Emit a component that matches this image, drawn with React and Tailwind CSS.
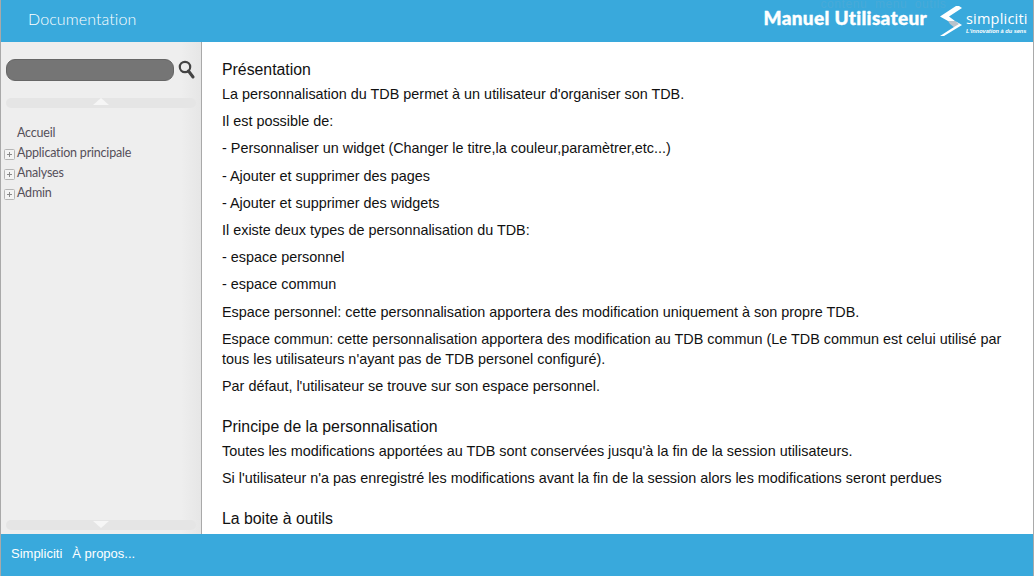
import React from "react";

const paragraphs1 = [
  "La personnalisation du TDB permet à un utilisateur d'organiser son TDB.",
  "Il est possible de:",
  "- Personnaliser un widget (Changer le titre,la couleur,paramètrer,etc...)",
  "- Ajouter et supprimer des pages",
  "- Ajouter et supprimer des widgets",
  "Il existe deux types de personnalisation du TDB:",
  "- espace personnel",
  "- espace commun",
  "Espace personnel: cette personnalisation apportera des modification uniquement à son propre TDB.",
  "Espace commun: cette personnalisation apportera des modification au TDB commun (Le TDB commun est celui utilisé par tous les utilisateurs n'ayant pas de TDB personel configuré).",
  "Par défaut, l'utilisateur se trouve sur son espace personnel.",
];
const paragraphs2 = [
  "Toutes les modifications apportées au TDB sont conservées jusqu'à la fin de la session utilisateurs.",
  "Si l'utilisateur n'a pas enregistré les modifications avant la fin de la session alors les modifications seront perdues",
];

function Plus() {
  return (
    <svg width="11" height="11" viewBox="0 0 11 11" className="shrink-0">
      <rect x="0.5" y="0.5" width="10" height="10" rx="1" fill="#f4f4f4" stroke="#b5b5b5" />
      <path d="M3 5.5H8M5.5 3V8" stroke="#8a8a8a" fill="none" />
    </svg>
  );
}

function Item({ label, expandable }) {
  return (
    <div className="flex items-center h-5">
      <div className="w-[13px] pt-[3px] pl-[3px] shrink-0 flex">{expandable && <Plus />}</div>
      <span className="ml-[3px] text-[12.5px] tracking-[-0.2px] text-[#55505a] font-['Lato',sans-serif]">{label}</span>
    </div>
  );
}

function Scroller({ up }) {
  return (
    <div className="mx-[5px] h-[10px] rounded-[5px] bg-[#e5e5e5] flex justify-center">
      <svg width="16" height="8" viewBox="0 0 16 8" className={up ? "" : "mt-[1px]"}>
        <path d={up ? "M8 0L16 7H0Z" : "M0 0H16L8 7Z"} fill="#f6f6f6" />
      </svg>
    </div>
  );
}

export default function App() {
  return (
    <div className="w-[1034px] h-[576px] flex flex-col bg-white border-x border-[#a9a9a9] overflow-hidden font-['Liberation_Sans',Arial,sans-serif]">
      <header className="h-[42px] shrink-0 bg-[#39a9dc] flex items-center justify-between pl-[27px] pr-[6px]">
        <span className="mb-[5px] text-[16px] font-light tracking-[0.1px] text-white font-['Lato',sans-serif]">Documentation</span>
        <div className="flex items-center">
          <div className="relative mr-[12px] mb-[8px]">
            <span className="absolute left-[57px] -top-[8px] text-[12px] leading-[8px] tracking-[0.55px] text-[#48a9d8] whitespace-nowrap">contenu&nbsp; menu&nbsp; outils</span>
            <span className="relative block text-[19px] leading-none font-black text-white font-['Lato',sans-serif] tracking-[0.32px] [-webkit-text-stroke:0.4px_white]">Manuel Utilisateur</span>
          </div>
          <svg width="24" height="31" viewBox="0 0 24 31" className="shrink-0 mt-[1px]">
            <path d="M17 0H20L23 2L10 10.5L16 15H9L1 10.5Z" fill="#ffffff" />
            <path d="M9 15H16L21 18L16 22L11 18Z" fill="#b9c3cc" />
            <path d="M16 15L23 19L5 30H1L15 21L20 18Z" fill="#ffffff" />
          </svg>
          <div className="ml-[3px] flex flex-col w-[61px] mt-[3px]">
            <span className="text-[14.5px] leading-[15px] text-white font-['Open_Sans',sans-serif] tracking-[0.2px]">simpliciti</span>
            <span className="mt-[1px] text-[5.6px] leading-[8px] italic font-bold text-white whitespace-nowrap">L'innovation à du sens</span>
          </div>
        </div>
      </header>
      <div className="flex-1 min-h-0 flex">
        <aside className="w-[201px] shrink-0 border-r border-[#a9a9a9] bg-[linear-gradient(to_right,#eeeeee_90%,#e6e6e6_100%)] flex flex-col">
          <div className="flex items-center pl-[5px] pt-[17px]">
            <div className="w-[168px] h-[22px] rounded-[9px] bg-[#757575] border border-[#666666]" />
            <svg width="17" height="19" viewBox="0 0 17 19" className="ml-[4px] -mt-[1px]">
              <circle cx="7" cy="7" r="5.2" fill="none" stroke="#444444" strokeWidth="2.2" />
              <path d="M10.5 11L15 17" stroke="#444444" strokeWidth="3" strokeLinecap="round" />
            </svg>
          </div>
          <div className="mt-[17px]"><Scroller up /></div>
          <nav className="flex-1 pt-[15px]">
            <Item label="Accueil" />
            <Item label="Application principale" expandable />
            <Item label="Analyses" expandable />
            <Item label="Admin" expandable />
          </nav>
          <div className="mb-[4px]"><Scroller /></div>
        </aside>
        <main className="flex-1 min-w-0 overflow-hidden pl-[20px] pr-[20px] pt-[18px] text-[14.4px] leading-5 text-[#111111]">
          <h2 className="text-[15.84px] leading-[20px] mb-[4px]">Présentation</h2>
          {paragraphs1.map((p) => <p key={p} className="mb-[7.2px]">{p}</p>)}
          <h2 className="text-[15.84px] leading-[20px] mt-[21px] mb-[4px]">Principe de la personnalisation</h2>
          {paragraphs2.map((p) => <p key={p} className="mb-[7.2px]">{p}</p>)}
          <h2 className="text-[15.84px] leading-[20px] mt-[21px]">La boite à outils</h2>
        </main>
      </div>
      <footer className="h-[42px] shrink-0 bg-[#39a9dc] flex items-center gap-[10px] pl-[10px] pb-[3px] text-[13px] text-white">
        <span>Simpliciti</span>
        <span>À propos...</span>
      </footer>
    </div>
  );
}
